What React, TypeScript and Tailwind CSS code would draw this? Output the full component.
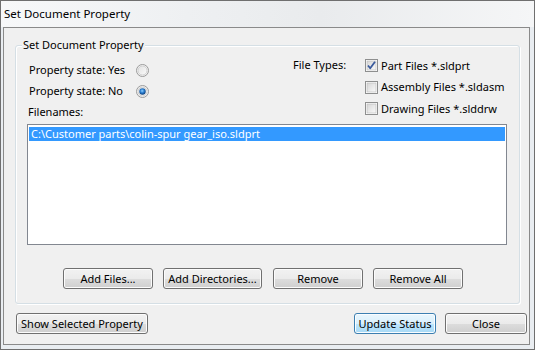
import React from "react";

const font = { fontFamily: '"Noto Sans", "Open Sans", sans-serif' };

const Radio: React.FC<{ checked?: boolean }> = ({ checked }) => (
  <svg width="13" height="13" viewBox="0 0 13 13">
    <defs>
      <linearGradient id="rg" x1="0" y1="0" x2="1" y2="1">
        <stop offset="0" stopColor="#e2e2e2" />
        <stop offset="1" stopColor="#fbfbfb" />
      </linearGradient>
      <radialGradient id="dot" cx="0.45" cy="0.4" r="0.6">
        <stop offset="0" stopColor="#8fd0ff" />
        <stop offset="0.5" stopColor="#2a7ed0" />
        <stop offset="1" stopColor="#0e3f7a" />
      </radialGradient>
    </defs>
    <circle cx="6.5" cy="6.5" r="6" fill="#f4f4f4" stroke="#9a9a9a" />
    <circle cx="6.5" cy="6.5" r="4.5" fill="url(#rg)" stroke="#c8c8c8" strokeWidth="0.8" />
    {checked && <circle cx="6.5" cy="6.5" r="3.2" fill="url(#dot)" />}
  </svg>
);

const Check: React.FC<{ checked?: boolean }> = ({ checked }) => (
  <svg width="13" height="13" viewBox="0 0 13 13">
    <defs>
      <linearGradient id="cg" x1="0" y1="0" x2="1" y2="1">
        <stop offset="0" stopColor="#d6d6d6" />
        <stop offset="1" stopColor="#fafafa" />
      </linearGradient>
    </defs>
    <rect x="0.5" y="0.5" width="12" height="12" fill="#fff" stroke="#8e8f8f" />
    <rect x="2" y="2" width="9" height="9" fill="url(#cg)" stroke="#b9b9b9" strokeWidth="0.6" />
    {checked && (
      <path d="M3 6.5 L5.2 9.2 L10 2.8" fill="none" stroke="#3a5a9c" strokeWidth="1.8" strokeLinejoin="round" />
    )}
  </svg>
);

const Btn: React.FC<{ w: string; def?: boolean; children: React.ReactNode }> = ({ w, def, children }) => (
  <button
    className={`${w} h-[21px] rounded-[3px] border text-[11px] leading-none whitespace-nowrap text-black flex items-center justify-center ${
      def
        ? "border-[#3c7fb1] bg-[linear-gradient(#eaf6fd_0%,#d9f0fc_50%,#bee6fd_51%,#a7d9f5_100%)] shadow-[inset_0_0_0_1px_#fafdff]"
        : "border-[#707070] bg-[linear-gradient(#f2f2f2_0%,#ebebeb_50%,#dddddd_51%,#cfcfcf_100%)] shadow-[inset_0_0_0_1px_#fcfcfc]"
    }`}
    style={font}
  >
    {children}
  </button>
);

export default function App() {
  return (
    <div
      className="w-[535px] h-[350px] border border-[#6f6f6f] bg-[#e9edf1] flex flex-col text-[11px] text-black whitespace-nowrap"
      style={font}
    >
      <div className="h-[26px] pl-[3px] flex items-center text-[11.5px] bg-[linear-gradient(90deg,#f7f8f9_0%,#eef0f2_35%,#e9ebed_60%,#f5f6f7_100%)]">
        Set Document Property
      </div>

      <div className="ml-[2px] mr-[4px] h-[318px] border border-[#8a8a8a] bg-[#f0f0f0] flex flex-col">
        <div className="relative ml-[11px] mt-[17px] w-[505px] h-[259px] rounded-[3px] border border-[#d5dfe5] shadow-[1px_1px_0_#fff,inset_1px_1px_0_#fff] flex flex-col">
          <span className="absolute left-[6px] top-[-9px] px-[1px] bg-[#f0f0f0] leading-[16px]">
            Set Document Property
          </span>

          <div className="flex pt-[9px] pl-[12px]">
            <div className="w-[265px] flex flex-col pt-[5px]">
              <div className="h-[21px] flex items-center">
                <span className="w-[108px] pl-[1px]">Property state: Yes</span>
                <Radio />
              </div>
              <div className="h-[21px] flex items-center">
                <span className="w-[108px] pl-[1px]">Property state: No</span>
                <Radio checked />
              </div>
              <div className="mt-[2px] h-[16px] leading-[16px]">Filenames:</div>
            </div>
            <div className="flex">
              <div className="w-[72px] h-[21px] flex items-center">File Types:</div>
              <div className="flex flex-col">
                {[
                  ["Part Files *.sldprt", true],
                  ["Assembly Files *.sldasm", false],
                  ["Drawing Files *.slddrw", false],
                ].map(([label, c]) => (
                  <div key={label as string} className="h-[21.5px] flex items-center gap-[3px]">
                    <Check checked={c as boolean} />
                    <span>{label as string}</span>
                  </div>
                ))}
              </div>
            </div>
          </div>

          <div className="ml-[11px] mt-[4px] w-[480px] h-[121px] border border-[#828790] bg-white p-[1px]">
            <div className="mt-[1px] h-[14px] bg-[#3399ff] text-white leading-[14px] pl-[2px]">
              C:\Customer parts\colin-spur gear_iso.sldprt
            </div>
          </div>

          <div className="flex ml-[47px] mt-[23px]">
            <Btn w="w-[90px]">Add Files...</Btn>
            <div className="w-[10px]" />
            <Btn w="w-[99px]">Add Directories...</Btn>
            <div className="w-[11px]" />
            <Btn w="w-[90px]">Remove</Btn>
            <div className="w-[10px]" />
            <Btn w="w-[90px]">Remove All</Btn>
          </div>
        </div>

        <div className="flex mt-[9px] ml-[12px]">
          <Btn w="w-[132px]">Show Selected Property</Btn>
          <div className="w-[206px]" />
          <Btn w="w-[82px]" def>
            Update Status
          </Btn>
          <div className="w-[9px]" />
          <Btn w="w-[82px]">Close</Btn>
        </div>
      </div>
    </div>
  );
}
